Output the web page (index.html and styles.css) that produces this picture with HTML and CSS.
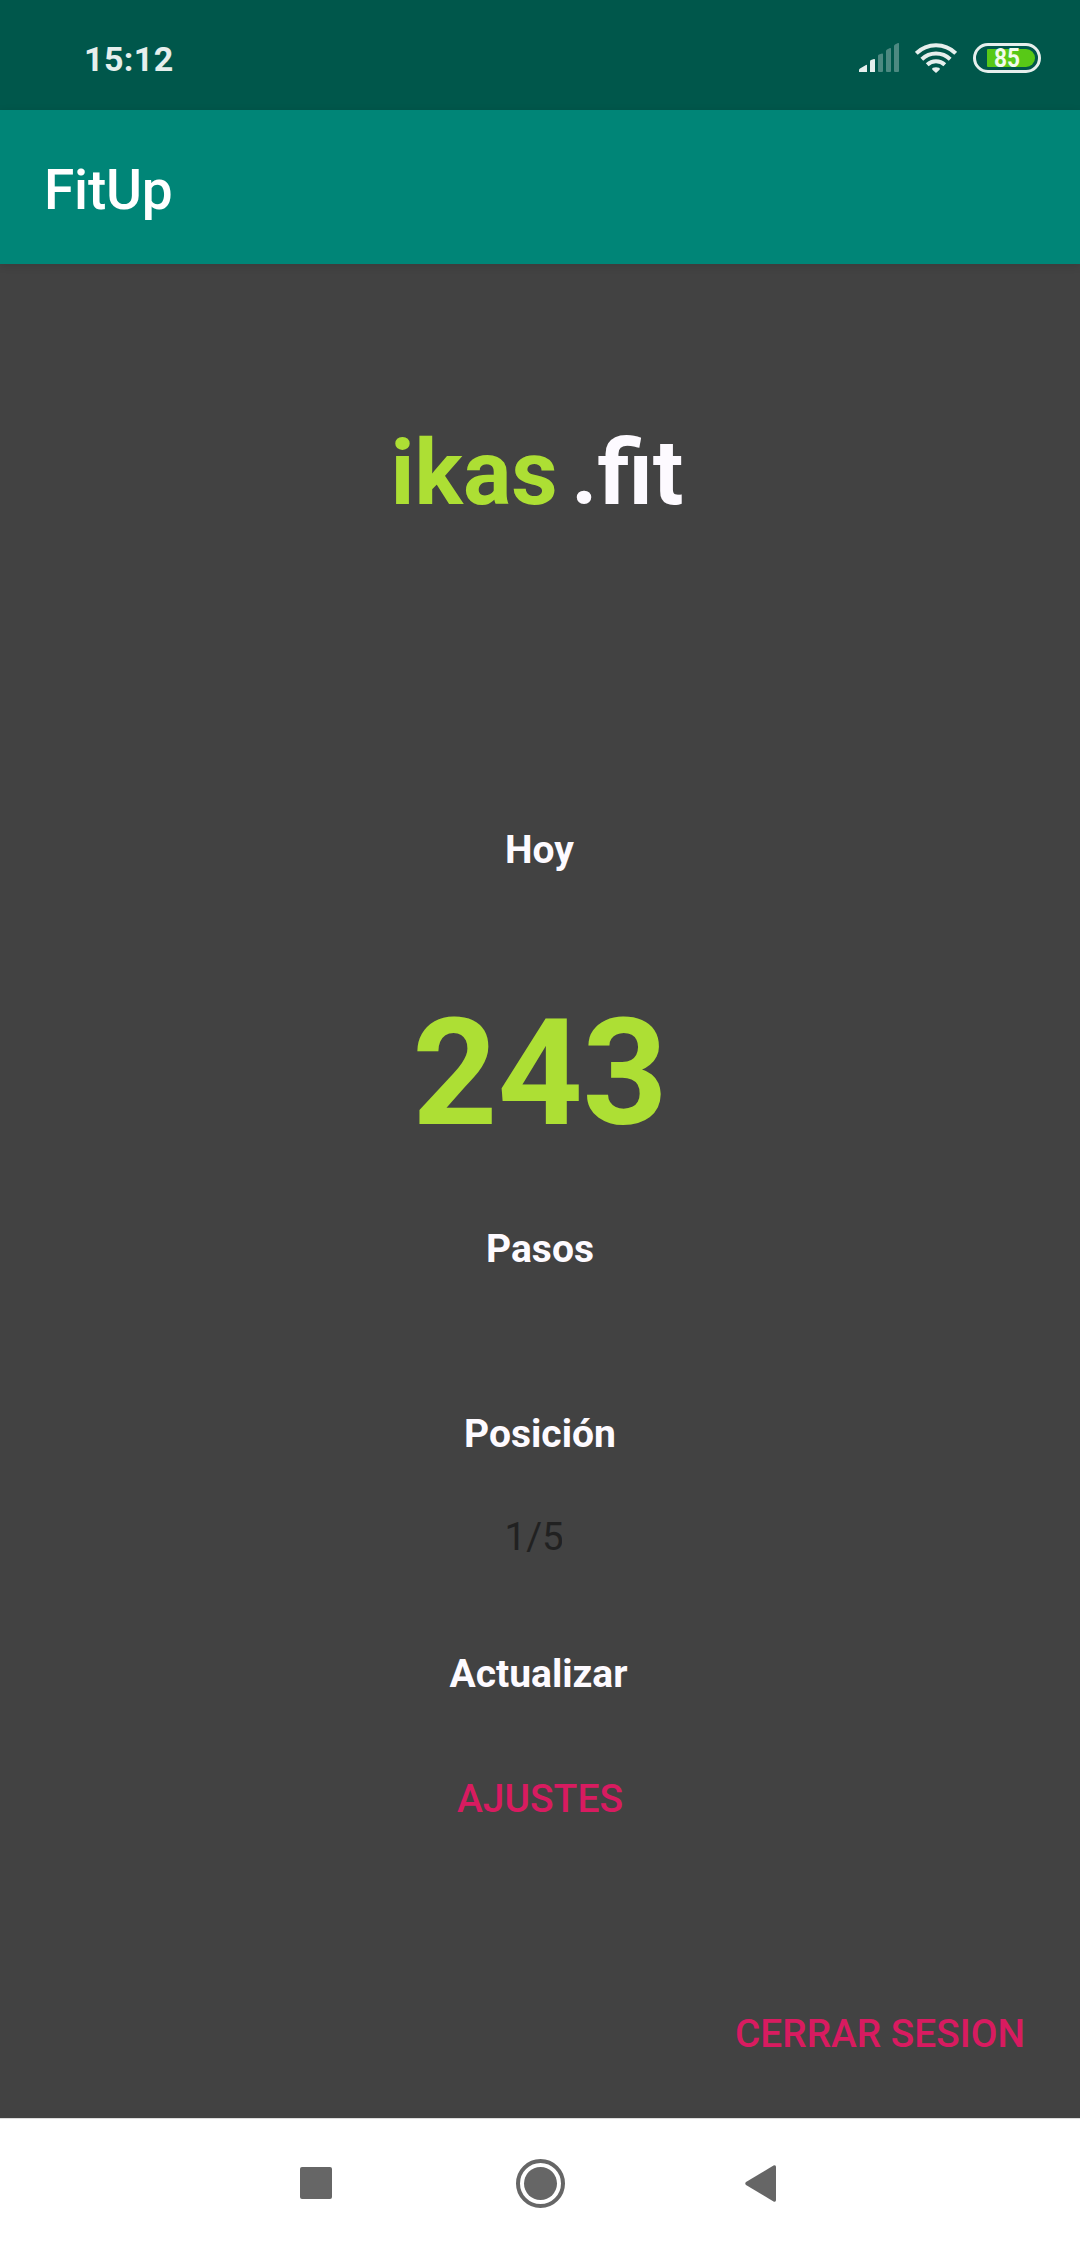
FILE: index.html
```html
<!DOCTYPE html>
<html lang="es">
<head>
<meta charset="utf-8">
<title>FitUp</title>
<link rel="stylesheet" href="styles.css">
</head>
<body>
<div class="status-bar">
  <span class="clock">15:12</span>
  <div class="status-icons">
    <svg class="signal" viewBox="0 0 40 30" width="40" height="30">
      <g fill="#e6efed">
        <path d="M0 29v-2q0-1 1-1.500L7 22q1-.5 1 .5V29z"/>
        <path d="M11 29V18.500q0-1 1-1.400l3-1.100q1-.2 1 .8V29z"/>
      </g>
      <g fill="#4d8981">
        <path d="M19 28V13q0-1 1-1.400l3-1.100q1-.2 1 .8V28q0 1-1 1h-3q-1 0-1-1z"/>
        <path d="M27 28V8q0-1 1-1.600l3-1.400q1-.2 1 .8V28q0 1-1 1h-3q-1 0-1-1z"/>
        <path d="M35 28V3q0-1 1-1.600L39 0q1-.2 1 .8V28q0 1-1 1h-3q-1 0-1-1z"/>
      </g>
    </svg>
    <svg class="wifi" viewBox="0 0 42 30" width="42" height="30">
      <g fill="none" stroke="#e6efed" stroke-width="4">
        <path d="M1.300 10.300A28 28 0 0 1 40.700 10.300"/>
        <path d="M6.800 16.200A20.500 20.500 0 0 1 35.200 16.200"/>
        <path d="M12.200 21.800A12.800 12.800 0 0 1 29.800 21.800"/>
      </g>
      <path d="M21 30l-3.600-3.300q-.8-1.200.6-1.900 3-1.300 6 0 1.400.7.600 1.900z" fill="#e6efed"/>
    </svg>
    <svg class="battery" viewBox="0 0 68 30" width="68" height="30">
      <rect x="1.500" y="1.500" width="65" height="27" rx="13.500" fill="none" stroke="#e6efed" stroke-width="3"/>
      <path d="M15 6h38a9 9 0 0 1 0 18H15q-1 0-1-1V7q0-1 1-1z" fill="#58c917"/>
      <text class="battery-level" x="21" y="23.500" textLength="26" lengthAdjust="spacingAndGlyphs">85</text>
    </svg>
  </div>
</div>
<header class="app-bar"><h1 class="app-title">FitUp</h1></header>
<main class="content">
  <div class="brand"><span class="brand-name">ikas</span><span class="brand-suffix">.fit</span></div>
  <div class="label today">Hoy</div>
  <div class="steps">243</div>
  <div class="label steps-label">Pasos</div>
  <div class="label position-label">Posición</div>
  <div class="position">1/5</div>
  <div class="label refresh">Actualizar</div>
  <div class="action settings">AJUSTES</div>
  <div class="action logout">CERRAR SESION</div>
</main>
<nav class="nav-bar">
  <svg class="recents" viewBox="0 0 32 32" width="32" height="32"><rect width="32" height="32" rx="2" fill="#666"/></svg>
  <svg class="home" viewBox="0 0 49 49" width="49" height="49"><circle cx="24.500" cy="24.500" r="22.500" fill="none" stroke="#666" stroke-width="4"/><circle cx="24.500" cy="24.500" r="16.500" fill="#666"/></svg>
  <svg class="back" viewBox="0 0 31 37" width="31" height="37"><path d="M1 17L28.500.5Q31-.5 31 2v33q0 2.500-2.500 1.500L1 20q-1.500-1.500 0-3z" fill="#666"/></svg>
</nav>
</body>
</html>
```
FILE: styles.css
```css
* { box-sizing: border-box; }
body {
  margin: 0;
  width: 1080px;
  height: 2248px;
  display: flex;
  flex-direction: column;
  overflow: hidden;
  background: #424242;
  font-family: Roboto, "Noto Sans", sans-serif;
}
.status-bar {
  height: 110px;
  padding: 39px 39px 0 84px;
  display: flex;
  justify-content: space-between;
  background: #00574b;
}
.clock {
  color: #e6efed;
  font-size: 34px;
  font-weight: 700;
  line-height: 40px;
  letter-spacing: 0.4px;
}
.status-icons { display: flex; align-items: flex-start; padding-top: 4px; }
.wifi { margin-left: 16px; }
.battery { margin-left: 16px; }
.battery-level { font-size: 25px; font-weight: 700; fill: #f2fbee; }
.app-bar {
  height: 154px;
  padding: 48px 44px 0;
  background: #008577;
  box-shadow: 0 2px 8px rgba(0, 0, 0, 0.12);
}
.app-title {
  margin: 0;
  color: #fff;
  font-size: 55px;
  font-weight: 500;
  line-height: 64px;
  letter-spacing: -0.2px;
}
.content {
  height: 1854px;
  display: flex;
  flex-direction: column;
  align-items: center;
}
.brand {
  margin: 149px 6px 0 0;
  display: flex;
  gap: 13.5px;
  font-size: 90.5px;
  font-weight: 700;
  line-height: 120px;
}
.brand-name { color: #addf34; }
.brand-suffix { color: #fdfaff; }
.label, .action { font-size: 39px; line-height: 52px; }
.label { color: #fdfaff; font-weight: 700; }
.action { color: #d81b60; font-weight: 500; }
.today { margin: 291px 1px 0 0; }
.steps {
  margin-top: 107px;
  color: #addf34;
  font-size: 148.5px;
  font-weight: 700;
  line-height: 180px;
}
.steps-label { margin-top: 60px; }
.position-label { margin-top: 133px; }
.position {
  margin: 51px 14px 0 0;
  width: 57px;
  overflow: hidden;
  color: #212121;
  font-size: 38.5px;
  line-height: 52px;
}
.refresh { margin: 85px 3px 0 0; }
.settings { margin-top: 73px; }
.logout {
  margin: 183px 55px 0 0;
  align-self: flex-end;
  font-size: 38.8px;
}
.nav-bar {
  height: 130px;
  padding: 0 304px 0 300px;
  display: flex;
  align-items: center;
  justify-content: space-between;
  background: #fff;
  border-top: 1px solid #dcdcdc;
}
.recents { margin-bottom: 1px; }
.home { margin-left: 4px; }
```
